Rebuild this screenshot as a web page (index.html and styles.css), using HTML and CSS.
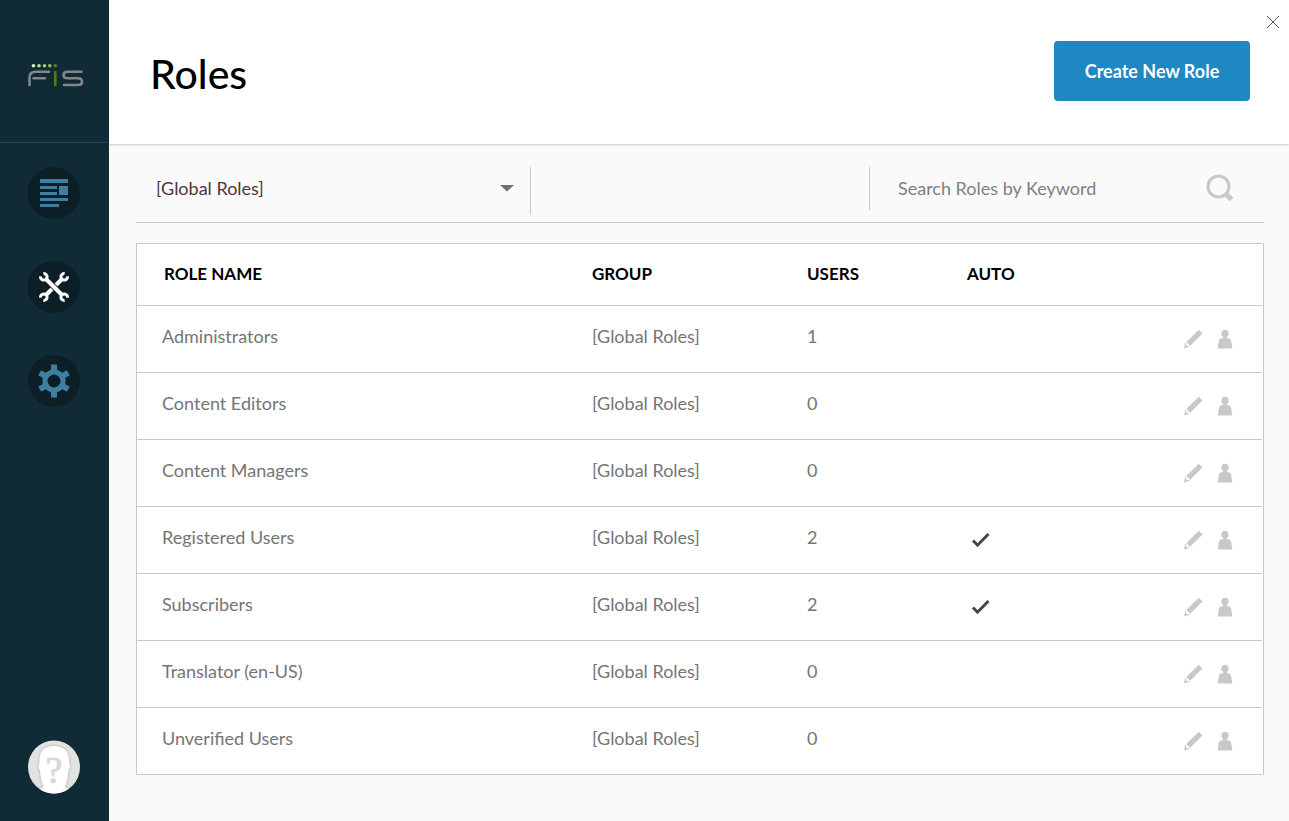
FILE: index.html
```
<!DOCTYPE html>
<html lang="en">
<head>
<meta charset="utf-8">
<title>Roles</title>
<meta name="viewport" content="width=device-width, initial-scale=1">
<link rel="stylesheet" href="styles.css">
</head>
<body>
<svg class="sprite" aria-hidden="true">
  <symbol id="pencil" viewBox="0 0 20 20"><path d="M15.800 .8L19.500 4.500L7.200 16.800L3.300 12.900zM2.300 13.600L3.200 14.500L2.800 16L4.200 17.200L5.700 16.900L6.500 17.800L1 19.500z"/></symbol>
  <symbol id="person" viewBox="0 0 16 20"><path d="M8 .8a3.700 3.700 0 0 1 2.300 6.600c-.8.600-.8 1.700.3 1.900C13.300 9.600 13.800 10.500 14.200 12L15.300 19.500H.7L1.800 12C2.200 10.500 2.700 9.600 5.400 9.300c1.100-.2 1.100-1.300.3-1.900A3.700 3.700 0 0 1 8 .8z"/></symbol>
  <symbol id="check" viewBox="0 0 20 16"><path d="M2 8.500L6.500 13.200L17.500 2" fill="none" stroke="#464646" stroke-width="3"/></symbol>
</svg>
<div class="app">
  <aside class="sidebar">
    <a class="brand" href="#" aria-label="FIS">
      <svg width="56" height="24" viewBox="0 0 56 24" fill="none" stroke-width="2.600" stroke-linecap="round">
        <g stroke="#85868b"><path d="M1.500 21V13.500Q1.500 7.700 7.500 7.700H21M5.500 14.200H17M53.500 7.700H39.500Q35.500 7.700 35.500 11Q35.500 14.200 39.500 14.200H50Q54 14.200 54 17.700Q54 21 50 21H36"/></g>
        <path d="M27.300 8V21" stroke="#4f7c1c"/>
        <g stroke="none"><circle cx="5.500" cy="1.800" r="1.800" fill="#dff0c8"/><circle cx="11" cy="1.800" r="1.800" fill="#bfdf94"/><circle cx="16.500" cy="1.800" r="1.800" fill="#a5d168"/><circle cx="21.800" cy="1.800" r="1.800" fill="#8cc63f"/><circle cx="27.300" cy="1.800" r="1.800" fill="#55801e"/></g>
      </svg>
    </a>
    <nav class="nav">
      <a class="nav-item" href="#" aria-label="Content">
        <svg width="30" height="30" viewBox="0 0 30 30" fill="#407fa2"><path d="M1 1h28v4H1zM1 8h17v3H1zM1 14h17v3H1zM20 8h9v9h-9zM1 20h28v3H1zM1 26h19v3H1z"/></svg>
      </a>
      <a class="nav-item" href="#" aria-label="Manage">
        <svg width="32" height="32" viewBox="-16 -16 32 32">
          <defs><path id="jaw" d="M-10.600-13.500A3.300 3.300 0 1 1-13.500-10.600"/></defs>
          <g fill="none" stroke="#fff" stroke-width="3">
            <path d="M8-8L-8 8" stroke-width="4"/>
            <path d="M-8-8L8 8" stroke="#0c1f26" stroke-width="6"/>
            <path d="M-8-8L8 8" stroke-width="4"/>
            <use href="#jaw"/><use href="#jaw" transform="rotate(90)"/><use href="#jaw" transform="rotate(180)"/><use href="#jaw" transform="rotate(270)"/>
          </g>
        </svg>
      </a>
      <a class="nav-item" href="#" aria-label="Settings">
        <svg width="34" height="34" viewBox="-17 -17 34 34">
          <g fill="#407fa2"><path d="M-3-16.500H3V16.500H-3z"/><path d="M-3-16.500H3V16.500H-3z" transform="rotate(60)"/><path d="M-3-16.500H3V16.500H-3z" transform="rotate(120)"/><circle r="11.500"/></g><circle r="6.500" fill="#0c1f26"/>
        </svg>
      </a>
    </nav>
    <a class="avatar" href="#" aria-label="My account">
      <svg width="52" height="54" viewBox="0 0 52 54">
        <defs><clipPath id="disc"><ellipse cx="26" cy="27" rx="26" ry="26.500"/></clipPath><filter id="soft" x="-30%" y="-30%" width="160%" height="160%"><feGaussianBlur stdDeviation="1.500"/></filter>
        <path id="head" d="M26 6C15 6 11 12 11.500 23C10 24 10.500 29 12 30C12.500 38 14 43 15.500 46Q14 49 8 51V56H44V51Q38 49 37 46C38.500 43 40 38 40.500 30C42 29 42.500 24 41 23C41.500 12 37 6 26 6z"/></defs>
        <g clip-path="url(#disc)"><path d="M0 0h52v54H0z" fill="#e2e2e2"/>
        <use href="#head" fill="#aaa" filter="url(#soft)"/>
        <use href="#head" fill="#fff"/></g>
        <text class="avatar-mark" x="26" y="43" text-anchor="middle">?</text>
      </svg>
    </a>
  </aside>
  <main class="main">
    <header class="header">
      <h1 class="title">Roles</h1>
      <button class="create" type="button">Create New Role</button>
      <button class="close" type="button" aria-label="Close"><svg width="14" height="14" viewBox="0 0 14 14"><path d="M1 1L13 13M13 1L1 13" stroke="#555"/></svg></button>
    </header>
    <section class="content">
      <form class="filters">
        <div class="group-filter">
          <select class="group-select" aria-label="Role group"><option>[Global Roles]</option></select>
          <svg class="caret" width="14" height="7" viewBox="0 0 14 7"><path d="M0 0H14L7 6.500z" fill="#707070"/></svg>
        </div>
        <div class="search">
          <input class="search-input" type="text" placeholder="Search Roles by Keyword" aria-label="Search Roles by Keyword">
          <button class="search-button" type="submit" aria-label="Search"><svg width="28" height="28" viewBox="0 0 28 28" fill="none" stroke="#c8c8c8"><circle cx="12.500" cy="12.500" r="10.500" stroke-width="3"/><path d="M20 20L25.500 25.500" stroke-width="5"/></svg></button>
        </div>
      </form>
      <div class="table-frame">
        <table class="roles">
          <thead><tr><th>ROLE NAME</th><th class="col-group">GROUP</th><th class="col-num">USERS</th><th class="col-num">AUTO</th><th class="col-actions" aria-label="Actions"></th></tr></thead>
          <tbody>
            <tr><td>Administrators</td><td>[Global Roles]</td><td>1</td><td></td><td class="actions"></td></tr>
            <tr><td>Content Editors</td><td>[Global Roles]</td><td>0</td><td></td><td class="actions"></td></tr>
            <tr><td>Content Managers</td><td>[Global Roles]</td><td>0</td><td></td><td class="actions"></td></tr>
            <tr><td>Registered Users</td><td>[Global Roles]</td><td>2</td><td class="auto"><svg width="20" height="16" role="img" aria-label="Yes"><use href="#check"/></svg></td><td class="actions"></td></tr>
            <tr><td>Subscribers</td><td>[Global Roles]</td><td>2</td><td class="auto"><svg width="20" height="16" role="img" aria-label="Yes"><use href="#check"/></svg></td><td class="actions"></td></tr>
            <tr><td>Translator (en-US)</td><td>[Global Roles]</td><td>0</td><td></td><td class="actions"></td></tr>
            <tr><td>Unverified Users</td><td>[Global Roles]</td><td>0</td><td></td><td class="actions"></td></tr>
          </tbody>
        </table>
      </div>
    </section>
  </main>
</div>
<script src="roles.js"></script>
</body>
</html>
```
FILE: roles.js
```
// Gives every role row its edit and assign-users buttons.
document.querySelectorAll('.actions').forEach(function (cell) {
  var name = cell.parentElement.cells[0].textContent;
  cell.innerHTML =
    '<div class="action-list">' +
    '<button type="button" class="action" aria-label="Edit ' + name + '"><svg width="20" height="20"><use href="#pencil"/></svg></button>' +
    '<button type="button" class="action" aria-label="Users in ' + name + '"><svg width="16" height="20"><use href="#person"/></svg></button>' +
    '</div>';
});
```
FILE: styles.css
```
* { box-sizing: border-box; }
body { margin: 0; font-family: Lato, "Open Sans", sans-serif; font-size: 18px; color: #757575; background: #fafafa; }
button { padding: 0; border: 0; background: none; font: inherit; cursor: pointer; }
svg { display: block; }
.sprite { position: absolute; width: 0; height: 0; }

.app { display: flex; min-height: 100vh; }
.sidebar { flex: 0 0 109px; display: flex; flex-direction: column; background: #102a36; padding-bottom: 27px; }
.brand { padding: 64px 0 54px 28px; border-bottom: 1px solid #1b4a60; }
.nav { display: flex; flex-direction: column; gap: 42px; padding: 24px 0 0 28px; }
.nav-item { display: flex; align-items: center; justify-content: center; width: 52px; height: 52px; border-radius: 50%; background: #0c1f26; }
.avatar { margin-top: auto; padding-left: 28px; }
.avatar-mark { font: 38px "Liberation Serif", serif; fill: #d8d8d8; stroke: #d8d8d8; }

.main { flex: 1; min-width: 0; }
.header { position: relative; display: flex; align-items: center; justify-content: space-between; height: 144px; padding: 0 39px 0 41px; background: #fff; box-shadow: 0 1px 2px rgba(0, 0, 0, .2); }
.title { margin: 0; padding-top: 4px; font-size: 41px; line-height: 48px; font-weight: 500; color: #000; }
.create { width: 196px; height: 60px; margin-bottom: 2px; border-radius: 4px; background: #1e88c3; color: #fff; font-weight: 700; }
.close { position: absolute; top: 15px; right: 9px; }

.content { padding: 0 25px 46px 27px; }
.filters { display: flex; justify-content: space-between; align-items: flex-start; height: 79px; padding-top: 23px; border-bottom: 1px solid #c8c8c8; }
.group-filter { position: relative; width: 395px; height: 48px; border-right: 1px solid #c8c8c8; }
.group-select { width: 100%; height: 42px; padding: 0 40px 0 20px; border: 0; background: none; appearance: none; font: inherit; color: #54343a; }
.caret { position: absolute; right: 16px; top: 18px; pointer-events: none; }
.search { display: flex; align-items: center; justify-content: space-between; width: 395px; height: 43px; padding: 0 30px 2px 28px; border-left: 1px solid #c8c8c8; }
.search-input { flex: 1; min-width: 0; height: 40px; padding: 0; border: 0; background: none; font: inherit; color: #707070; }
.search-input::placeholder { color: #808080; opacity: 1; }

.table-frame { margin-top: 20px; padding-right: 1px; border: solid #c8c8c8; border-width: 0 1px; background: #fff; }
.roles { width: 100%; table-layout: fixed; border-collapse: separate; border-spacing: 0; border-top: 1px solid #c8c8c8; }
.roles th, .roles td { padding: 0 0 6px; border-bottom: 1px solid #c8c8c8; text-align: left; }
.roles th { height: 62px; padding-bottom: 2px; font-size: 17px; font-weight: 700; color: #000; }
.roles td { height: 67px; }
.roles td:first-child { padding-left: 25px; }
.roles th:first-child { padding-left: 27px; }
.roles .col-group { width: 215px; }
.roles .col-num { width: 160px; }
.roles .col-actions { width: 135px; }
.roles .auto { padding: 0 0 0 4px; }
.roles .actions { padding: 0 29px 0 0; }
.action-list { display: flex; justify-content: flex-end; gap: 14px; }
.action { fill: #c8c8c8; }
```
